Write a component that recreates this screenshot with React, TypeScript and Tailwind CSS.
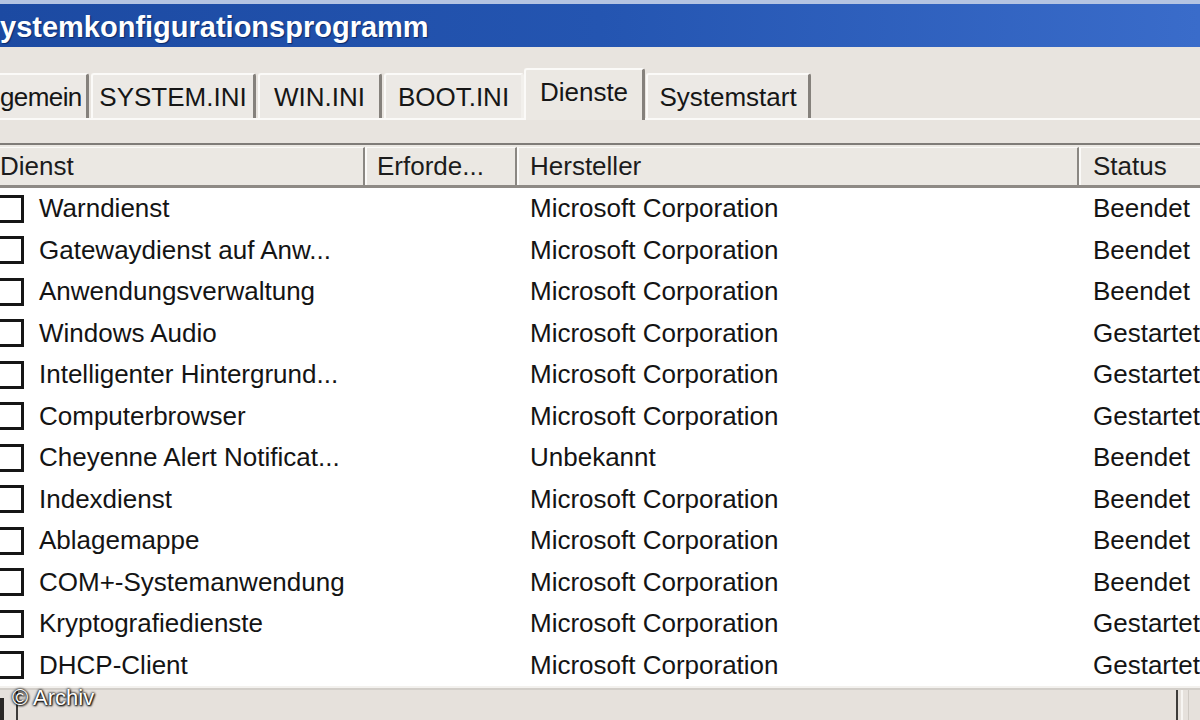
import React from "react";

const rows: [string, string, string][] = [
  ["Warndienst", "Microsoft Corporation", "Beendet"],
  ["Gatewaydienst auf Anw...", "Microsoft Corporation", "Beendet"],
  ["Anwendungsverwaltung", "Microsoft Corporation", "Beendet"],
  ["Windows Audio", "Microsoft Corporation", "Gestartet"],
  ["Intelligenter Hintergrund...", "Microsoft Corporation", "Gestartet"],
  ["Computerbrowser", "Microsoft Corporation", "Gestartet"],
  ["Cheyenne Alert Notificat...", "Unbekannt", "Beendet"],
  ["Indexdienst", "Microsoft Corporation", "Beendet"],
  ["Ablagemappe", "Microsoft Corporation", "Beendet"],
  ["COM+-Systemanwendung", "Microsoft Corporation", "Beendet"],
  ["Kryptografiedienste", "Microsoft Corporation", "Gestartet"],
  ["DHCP-Client", "Microsoft Corporation", "Gestartet"],
];

function Tab({
  label,
  className,
  selected,
}: {
  label: string;
  className: string;
  selected?: boolean;
}) {
  return (
    <div
      className={
        "flex items-center shrink-0 rounded-t-[3px] border-t-2 border-t-[#fbfaf8] border-l-[#fbfaf8] border-r-[3px] border-r-[#85817c] text-[26px] text-[#161616] whitespace-nowrap " +
        (selected
          ? "h-[52px] -mb-[2px] relative z-10 bg-[#ebe8e3] pb-[5px] "
          : "h-[45px] bg-[#ece9e5] pt-[2px] ") +
        className
      }
    >
      {label}
    </div>
  );
}

export default function App() {
  return (
    <div className="w-[1200px] h-[720px] overflow-hidden relative bg-[#e8e4df] font-['Liberation_Sans',Arial,sans-serif] flex flex-col">
      {/* Title bar */}
      <div className="h-[47px] shrink-0 border-t-[4px] border-t-[#b4c4e2] bg-gradient-to-r from-[#1c4aa2] via-[#2455b1] to-[#3a6cca] flex items-center">
        <span className="text-white font-bold text-[29px] leading-none ml-0 pt-[4px] [text-shadow:1px_1px_1px_#0a2a6a] whitespace-nowrap">
          ystemkonfigurationsprogramm
        </span>
      </div>

      {/* Tabs */}
      <div className="h-[73px] shrink-0 flex items-end border-b-2 border-b-[#fbfaf8]">
        <Tab label="gemein" className="w-[89px] ml-0 justify-start pl-0 border-l-0 rounded-tl-none tracking-[-0.6px]" />
        <Tab label="SYSTEM.INI" className="w-[165px] ml-[2px] justify-center border-l-2" />
        <Tab label="WIN.INI" className="w-[124px] ml-[2px] justify-center border-l-2" />
        <Tab label="BOOT.INI" className="w-[140px] ml-[2px] justify-center border-l-2 border-r-[#f2f0ec]" />
        <Tab label="Dienste" selected className="w-[121px] ml-0 justify-center border-l-2" />
        <Tab label="Systemstart" className="w-[165px] ml-[1px] justify-center border-l-2" />
      </div>

      {/* spacer panel */}
      <div className="h-[23px] shrink-0" />

      {/* List */}
      <div className="flex-1 flex flex-col border-t-2 border-t-[#7f7c78] bg-white">
        {/* Header */}
        <div className="h-[43px] shrink-0 flex bg-[#ebe8e3] border-b-[3px] border-b-[#8e8a85] text-[26px] text-[#1c1c1c] pt-[2px]">
          <div className="w-[365px] shrink-0 flex items-center border-r-2 border-r-[#8a8782] border-t border-t-[#fbfaf8]">
            <span className="ml-0">Dienst</span>
          </div>
          <div className="w-[152px] shrink-0 flex items-center pl-[10px] border-l-2 border-l-[#fbfaf8] border-r-2 border-r-[#8a8782] border-t border-t-[#fbfaf8]">
            Erforde...
          </div>
          <div className="w-[562px] shrink-0 flex items-center pl-[11px] border-l-2 border-l-[#fbfaf8] border-r-2 border-r-[#8a8782] border-t border-t-[#fbfaf8]">
            Hersteller
          </div>
          <div className="flex-1 flex items-center pl-[12px] border-l-2 border-l-[#fbfaf8] border-t border-t-[#fbfaf8]">
            Status
          </div>
        </div>

        {/* Rows */}
        <div className="flex flex-col text-[26px] text-[#141414]">
          {rows.map(([name, vendor, status], i) => (
            <div key={i} className="h-[41.5px] flex items-center whitespace-nowrap">
              <div className="w-[365px] shrink-0 flex items-center">
                <div className="w-[28px] h-[28px] ml-[-4px] border-[3px] border-[#161616] bg-white shrink-0" />
                <span className="ml-[15px]">{name}</span>
              </div>
              <div className="w-[152px] shrink-0" />
              <div className="w-[562px] shrink-0 pl-[13px]">{vendor}</div>
              <div className="flex-1 pl-[14px]">{status}</div>
            </div>
          ))}
        </div>

        {/* Bottom scrollbar area */}
        <div className="flex-1 flex flex-col bg-[#e6e1dc] border-t-2 border-t-[#f3f1ee]">
          <div className="h-[2px] bg-[#d2cec9] shrink-0" />
          <div className="flex-1 flex">
            <div className="w-[18px] shrink-0 border-r-2 border-r-[#3e3c3a] flex items-end">
              <div className="w-[4px] h-[22px] bg-[#2a2826]" />
            </div>
            <div className="w-[1158px] shrink-0" />
            <div className="flex-1 border-l-2 border-l-[#3e3c3a] flex">
              <div className="w-[5px] border-r-2 border-r-[#f7f5f2]" />
              <div className="w-[6px] border-r border-r-[#cfcac4]" />
            </div>
          </div>
        </div>
      </div>

      {/* Watermark */}
      <div className="absolute left-[12px] top-[687px] text-[22px] text-white leading-none [text-shadow:0_0_2px_#000,0_0_3px_#000,1px_1px_2px_#000]">
        © Archiv
      </div>
    </div>
  );
}
